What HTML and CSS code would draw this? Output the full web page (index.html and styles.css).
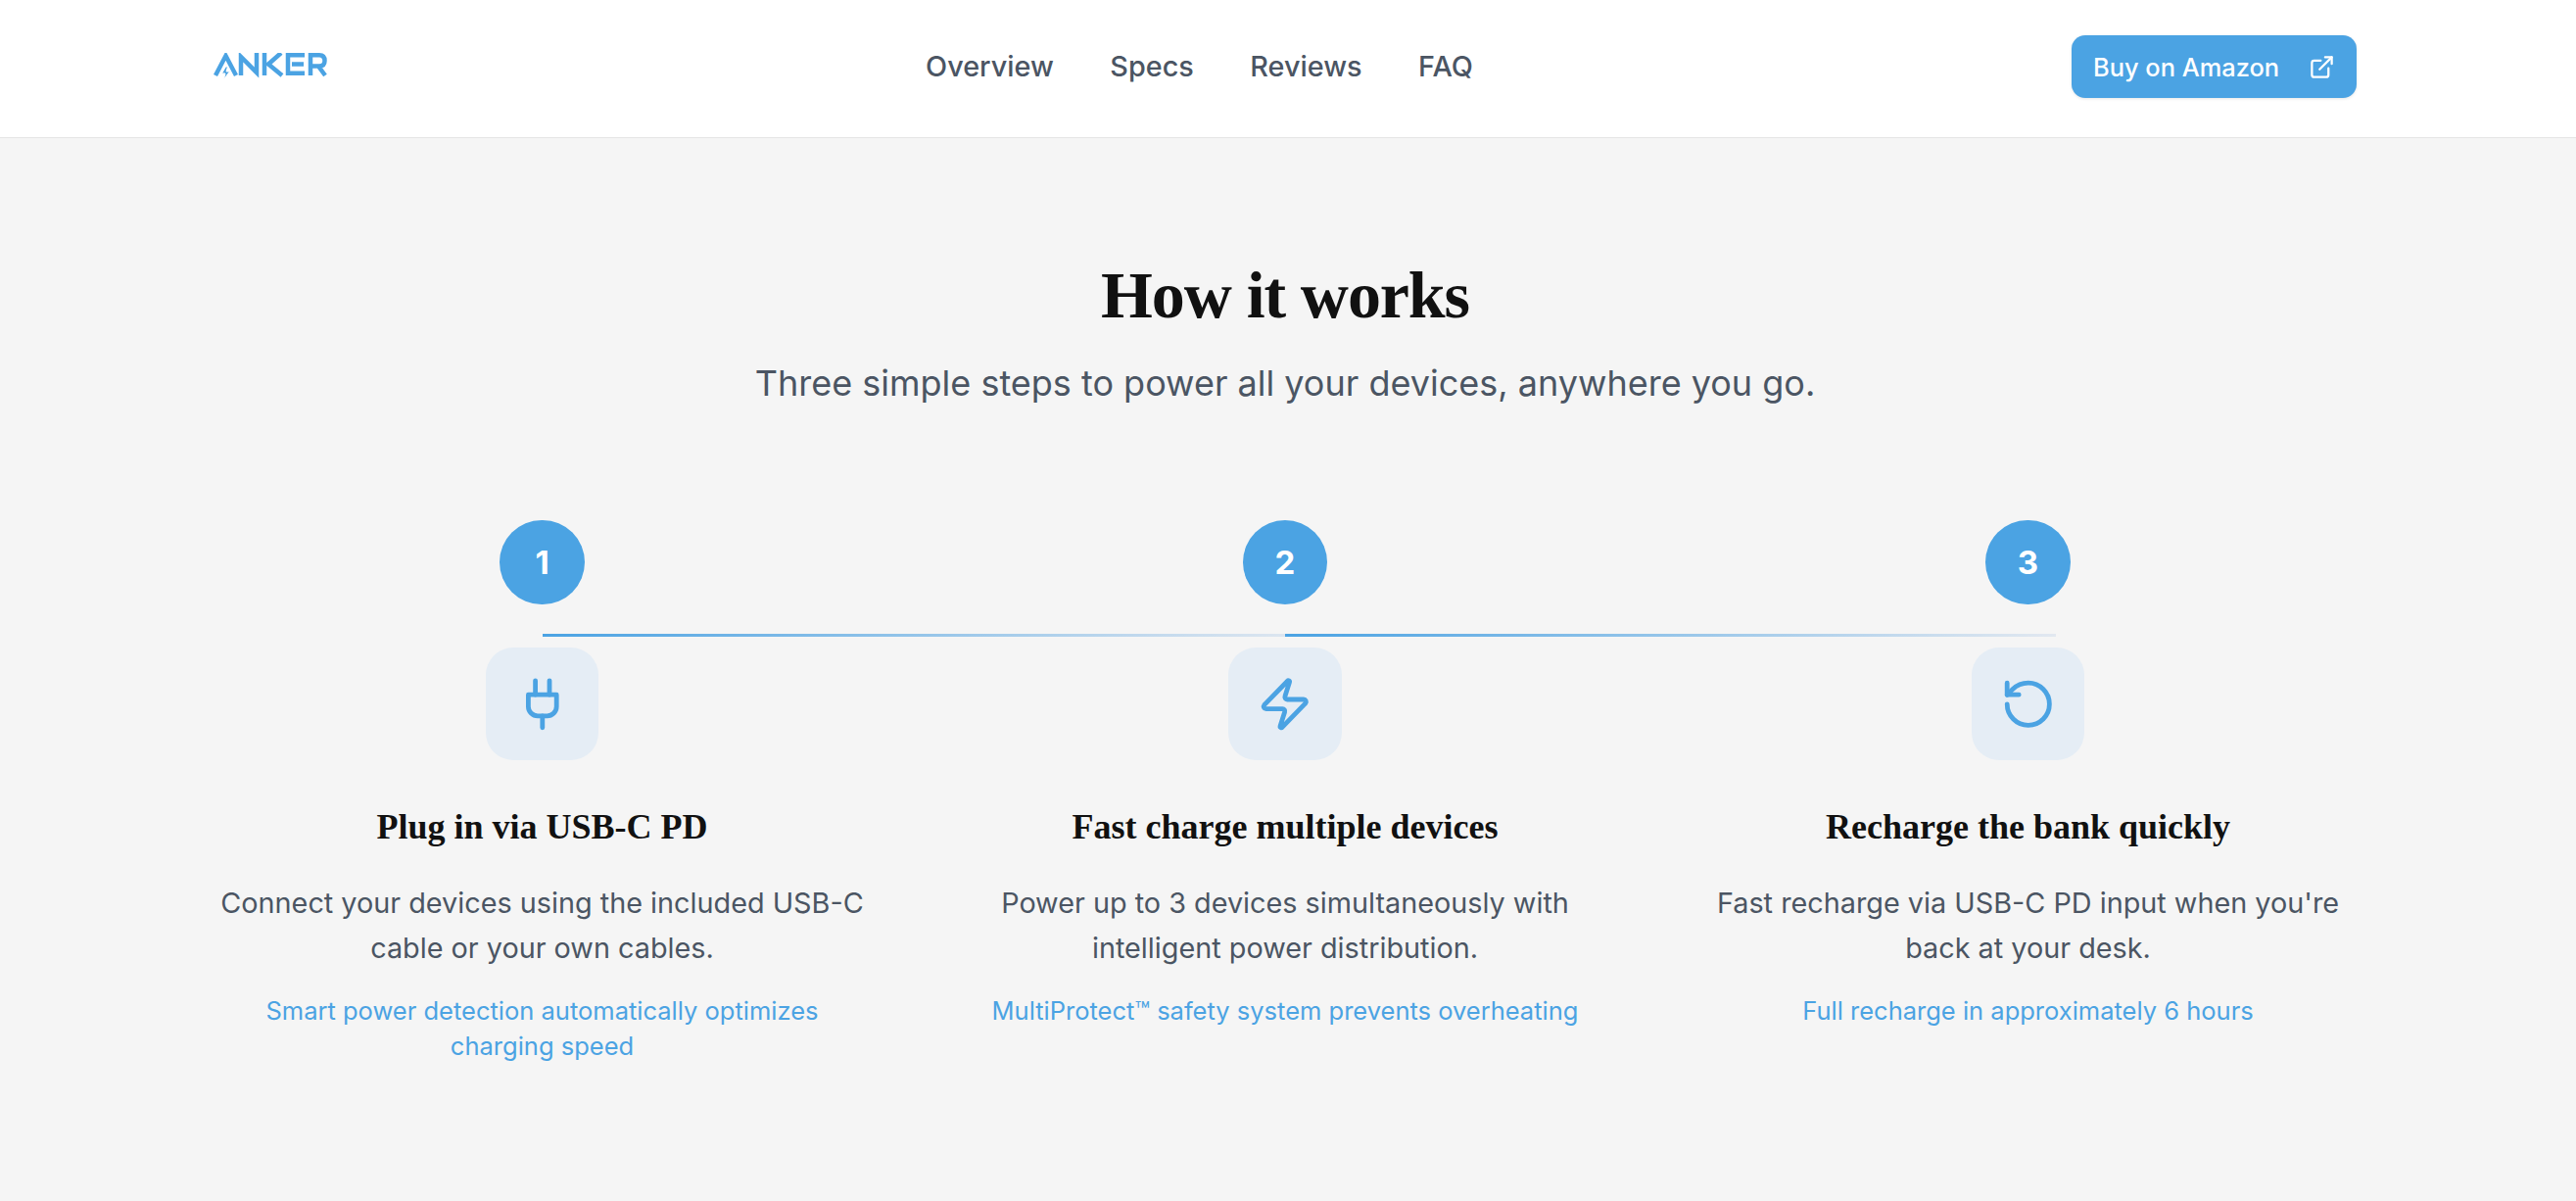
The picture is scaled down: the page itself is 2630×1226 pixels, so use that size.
FILE: index.html
```html
<!DOCTYPE html>
<html lang="en">

<head>
    <meta charset="UTF-8">
    <meta name="viewport" content="width=device-width, initial-scale=1.0">
    <title>How it works</title>
    <link rel="stylesheet" href="styles.css">
</head>

<body>
    <!-- Nav -->
    <div id="nav">
        <div class="nav-inner">
            <a class="logo" href="#" aria-label="Anker">
                <svg viewBox="0 0 116 30" width="116" height="30" fill="none" stroke="#4ba3e3" stroke-width="4.5">
                    <path d="M2 23 L12.5 3 L23 23" />
                    <path d="M12.5 14 L8.5 21 H12 L10.5 27 L16.5 19 H13 L14.5 14 Z" fill="#4ba3e3" stroke="#fff" stroke-width="1" />
                    <path d="M28 23 V4 L44 20 V0" />
                    <path d="M52 0 V23 M69 0 L56 11.5 L70 23" />
                    <path d="M93 2.25 H76 V20.75 H93 M80 11.5 H92" />
                    <path d="M99 23 V2.25 H108 Q113.5 2.25 113.5 8 Q113.5 13.5 108 13.5 H100 M107 13.5 L114 23" />
                </svg>
            </a>
            <div class="nav-opt">
                <a href="#">Overview</a>
                <a href="#">Specs</a>
                <a href="#">Reviews</a>
                <a href="#">FAQ</a>
            </div>
            <a class="btn" href="#">
                Buy on Amazon
                <svg class="btn-icon" viewBox="0 0 24 24" fill="none" stroke="currentColor" stroke-width="2" stroke-linecap="round" stroke-linejoin="round">
                    <path d="M15 3h6v6" />
                    <path d="M10 14 21 3" />
                    <path d="M18 13v6a2 2 0 0 1-2 2H5a2 2 0 0 1-2-2V8a2 2 0 0 1 2-2h6" />
                </svg>
            </a>
        </div>
    </div>

    <!-- How it works -->
    <div class="section">
        <h1 class="heading">How it works</h1>
        <p class="sub">Three simple steps to power all your devices, anywhere you go.</p>

        <div class="steps">
            <div class="step">
                <div class="num">1</div>
                <div class="line"></div>
                <div class="icon-box">
                    <svg class="icon" viewBox="0 0 24 24" fill="none" stroke="currentColor" stroke-width="2" stroke-linecap="round" stroke-linejoin="round">
                        <path d="M12 22v-5" />
                        <path d="M9 8V2" />
                        <path d="M15 8V2" />
                        <path d="M18 8v5a4 4 0 0 1-4 4h-4a4 4 0 0 1-4-4V8Z" />
                    </svg>
                </div>
                <h3 class="inner-heading">Plug in via USB-C PD</h3>
                <p class="desc">Connect your devices using the included USB-C cable or your own cables.</p>
                <p class="note">Smart power detection automatically optimizes charging speed</p>
            </div>

            <div class="step">
                <div class="num">2</div>
                <div class="line"></div>
                <div class="icon-box">
                    <svg class="icon" viewBox="0 0 24 24" fill="none" stroke="currentColor" stroke-width="2" stroke-linecap="round" stroke-linejoin="round">
                        <path d="M4 14a1 1 0 0 1-.78-1.63l9.9-10.2a.5.5 0 0 1 .86.46l-1.92 6.02A1 1 0 0 0 13 10h7a1 1 0 0 1 .78 1.63l-9.9 10.2a.5.5 0 0 1-.86-.46l1.92-6.02A1 1 0 0 0 11 14z" />
                    </svg>
                </div>
                <h3 class="inner-heading">Fast charge multiple devices</h3>
                <p class="desc">Power up to 3 devices simultaneously with intelligent power distribution.</p>
                <p class="note">MultiProtect™ safety system prevents overheating</p>
            </div>

            <div class="step">
                <div class="num">3</div>
                <div class="icon-box">
                    <svg class="icon" viewBox="0 0 24 24" fill="none" stroke="currentColor" stroke-width="2" stroke-linecap="round" stroke-linejoin="round">
                        <path d="M3 12a9 9 0 1 0 9-9 9.75 9.75 0 0 0-6.74 2.74L3 8" />
                        <path d="M3 3v5h5" />
                    </svg>
                </div>
                <h3 class="inner-heading">Recharge the bank quickly</h3>
                <p class="desc">Fast recharge via USB-C PD input when you're back at your desk.</p>
                <p class="note">Full recharge in approximately 6 hours</p>
            </div>
        </div>
    </div>
</body>

</html>
```

FILE: styles.css
```css
/* Reset */
* {
    margin: 0;
    padding: 0;
    box-sizing: border-box;
}

body {
    font-family: Inter, "Noto Sans", sans-serif;
    background-color: #f5f5f5;
    min-height: 1226px;
}

a {
    text-decoration: none;
}

/* Header and Navigation */
#nav {
    background-color: #fff;
    border-bottom: 1px solid #e5e5e5;
    height: 141px;
}

.nav-inner {
    width: 2188px;
    margin-left: 218px;
    height: 136px;
    display: flex;
    align-items: center;
    justify-content: space-between;
}

.logo {
    display: block;
    height: 30px;
    margin-top: 2px;
}

.nav-opt {
    display: flex;
    gap: 57.5px;
    margin-bottom: 1px;
}

.nav-opt > a {
    color: #4b5563;
    font-size: 28.8px;
    font-weight: 500;
}

.btn {
    display: flex;
    align-items: center;
    justify-content: space-between;
    width: 291px;
    height: 64px;
    padding: 0 22px;
    background-color: #4ba3e3;
    color: #fff;
    border-radius: 14px;
    font-size: 25.4px;
    font-weight: 500;
    box-shadow: 0 1px 3px rgba(0, 0, 0, 0.1);
}

.btn-icon {
    width: 27px;
    height: 27px;
}

/* Section */
.section {
    width: 2188px;
    margin-left: 218px;
    padding-top: 118px;
    text-align: center;
}

.heading {
    font-family: "Liberation Serif", serif;
    font-size: 68px;
    line-height: 84px;
    font-weight: 700;
    letter-spacing: -1.1px;
    color: #111;
}

.sub {
    margin-top: 23px;
    font-size: 36px;
    line-height: 50px;
    color: #4b5563;
}

/* Steps */
.steps {
    display: grid;
    grid-template-columns: repeat(3, 1fr);
    gap: 87.5px;
    margin-top: 115px;
}

.step {
    position: relative;
    display: flex;
    flex-direction: column;
    align-items: center;
}

.num {
    width: 86.4px;
    height: 86.4px;
    border-radius: 50%;
    background-color: #4ba3e3;
    color: #fff;
    font-size: 33px;
    font-weight: 700;
    display: flex;
    align-items: center;
    justify-content: center;
}

.line {
    position: absolute;
    top: 116px;
    left: 50%;
    width: 787px;
    height: 3px;
    background: linear-gradient(to right, #4ba3e3, #e2e8f0);
}

.icon-box {
    width: 115.2px;
    height: 115.2px;
    margin-top: 43.6px;
    border-radius: 28px;
    background-color: #e5edf5;
    color: #4ba3e3;
    display: flex;
    align-items: center;
    justify-content: center;
}

.icon {
    width: 57.6px;
    height: 57.6px;
}

.inner-heading {
    margin-top: 46px;
    font-family: "Liberation Serif", serif;
    font-size: 36px;
    line-height: 44px;
    font-weight: 700;
    color: #111;
}

.desc {
    margin-top: 33px;
    font-size: 28.8px;
    line-height: 46px;
    color: #4b5563;
}

.note {
    margin-top: 23px;
    font-size: 25.5px;
    line-height: 36px;
    color: #4ba3e3;
}
```
